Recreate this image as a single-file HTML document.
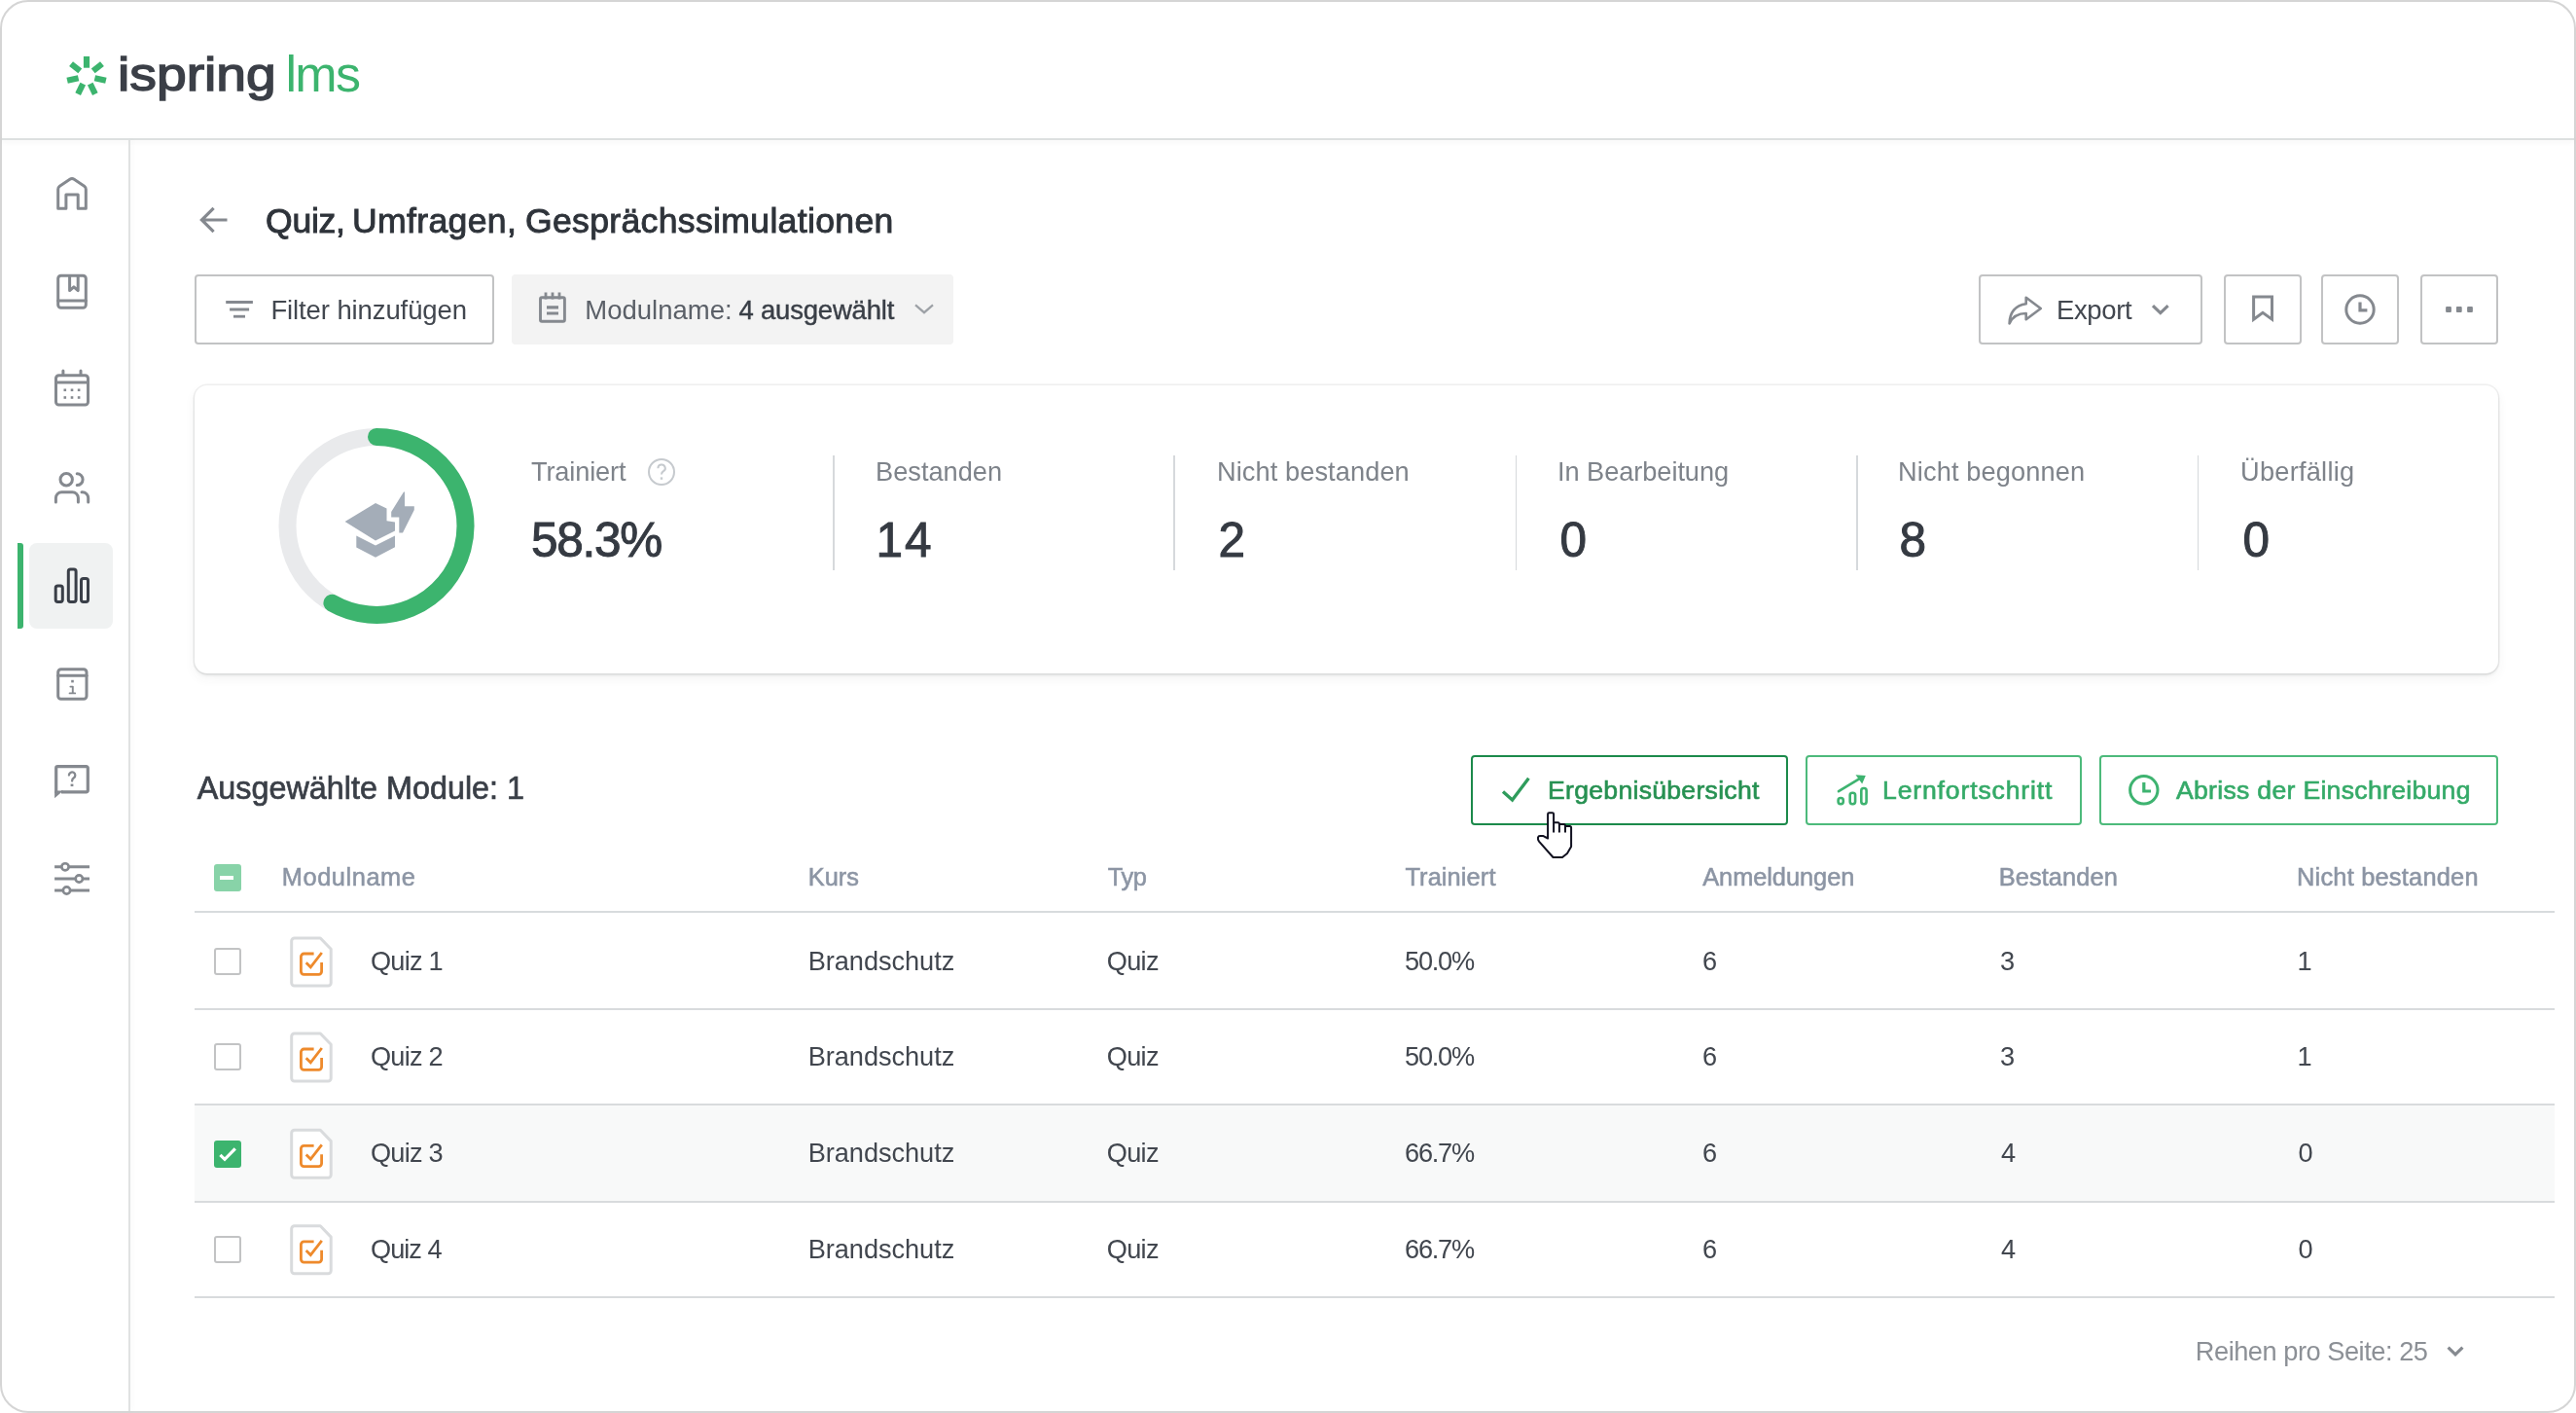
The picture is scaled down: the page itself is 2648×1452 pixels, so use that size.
<!DOCTYPE html>
<html lang="de"><head><meta charset="utf-8"><title>iSpring LMS – Quiz, Umfragen, Gesprächssimulationen</title>
<style>
html,body{margin:0;padding:0;background:#fff;}
body{width:2648px;height:1452px;overflow:hidden;position:relative;font-family:"Liberation Sans",sans-serif;}
#page{position:absolute;left:0;top:0;width:2648px;height:1452px;filter:blur(0.65px);}
.frame{position:absolute;left:0;top:0;width:2644px;height:1448px;border:2px solid #d5d5d5;border-radius:29px;background:#fff;overflow:hidden;}
.abs{position:absolute;}
.t{position:absolute;white-space:nowrap;font-family:"Liberation Sans",sans-serif;}
.hline{position:absolute;left:2px;top:142px;width:2644px;height:2px;background:#dde0e0;box-shadow:0 2px 4px rgba(120,130,130,.10);}
.vline{position:absolute;left:132px;top:144px;width:2px;height:1306px;background:#e0e2e2;box-shadow:2px 0 4px rgba(120,130,130,.06);}
.btn{position:absolute;box-sizing:border-box;border:2px solid #c2c3c4;border-radius:4px;background:#fff;}
.gbtn{position:absolute;box-sizing:border-box;border:2px solid #4dba7b;border-radius:4px;background:#fff;}
.chip{position:absolute;background:#f3f3f3;border-radius:4px;}
.card{position:absolute;left:200px;top:396px;width:2368px;height:296px;border-radius:13px;background:#fff;box-shadow:0 0 0 1.5px rgba(60,70,70,.08),0 2px 3px rgba(60,70,70,.09),0 5px 12px rgba(60,70,70,.06);}
.sep{position:absolute;top:468px;width:1.6px;height:118px;background:#d6d9dc;}
.rl{position:absolute;left:200px;width:2426px;height:2px;background:#d8dbdd;}
.cb{position:absolute;box-sizing:border-box;width:28px;height:28px;border:2px solid #c2c3c4;border-radius:3px;background:#fff;}
svg{position:absolute;overflow:visible;}
h1{margin:0;padding:0;font-size:inherit;font-weight:normal;}
header,section,footer,main{display:block;margin:0;padding:0;}
</style></head>
<body>
<div class="frame"></div>
<div id="page">
<div class="hline"></div><div class="vline"></div>
<div class="abs" style="left:18px;top:558px;width:6px;height:88px;background:#3cb46e;border-radius:0 3px 3px 0;"></div><div class="abs" style="left:30px;top:558px;width:86px;height:88px;background:#f0f2f2;border-radius:8px;"></div>
<div class="btn" style="left:200px;top:282px;width:307.5px;height:71.5px;"></div><div class="chip" style="left:526px;top:282px;width:454px;height:71.5px;"></div><div class="btn" style="left:2034px;top:282px;width:229.5px;height:71.5px;"></div><div class="btn" style="left:2286px;top:282px;width:79.5px;height:71.5px;"></div><div class="btn" style="left:2386px;top:282px;width:79.5px;height:71.5px;"></div><div class="btn" style="left:2488px;top:282px;width:79.5px;height:71.5px;"></div>
<div class="card"></div>
<div class="sep" style="left:856px;"></div><div class="sep" style="left:1206px;"></div><div class="sep" style="left:1557.7px;"></div><div class="sep" style="left:1908px;"></div><div class="sep" style="left:2258.5px;"></div>
<div class="gbtn" style="left:1512px;top:776px;width:326px;height:72px;border-color:#1c8a4b;"></div><div class="gbtn" style="left:1856px;top:776px;width:284px;height:72px;"></div><div class="gbtn" style="left:2158px;top:776px;width:409.5px;height:72px;"></div>
<div class="abs" style="left:200px;top:1136px;width:2426px;height:98.5px;background:#f8f9f9;"></div><div class="rl" style="top:936px;"></div><div class="rl" style="top:1035.8px;"></div><div class="rl" style="top:1134px;"></div><div class="rl" style="top:1233.6px;"></div><div class="rl" style="top:1332px;"></div>
<div class="abs" style="left:220px;top:888px;width:28px;height:28px;border-radius:3px;background:#88d3a8;"></div><div class="abs" style="left:226px;top:900px;width:14px;height:4px;background:#fff;"></div><div class="cb" style="left:220px;top:974px;"></div><div class="cb" style="left:220px;top:1072px;"></div><div class="cb" style="left:220px;top:1269.5px;"></div><div class="abs" style="left:220px;top:1172px;width:28px;height:28px;border-radius:3px;background:#3cb46e;"></div>
<svg width="2648" height="1452" viewBox="0 0 2648 1452" style="left:0;top:0;">
<g transform="translate(89 78.3)" fill="#3cb46e">
<rect x="-3.1" y="-20.4" width="6.2" height="11.8" transform="rotate(0.00)"/>
<rect x="-3.1" y="-20.4" width="6.2" height="11.8" transform="rotate(51.43)"/>
<rect x="-3.1" y="-20.4" width="6.2" height="11.8" transform="rotate(102.86)"/>
<rect x="-3.1" y="-20.4" width="6.2" height="11.8" transform="rotate(154.29)"/>
<rect x="-3.1" y="-20.4" width="6.2" height="11.8" transform="rotate(205.71)"/>
<rect x="-3.1" y="-20.4" width="6.2" height="11.8" transform="rotate(257.14)"/>
<rect x="-3.1" y="-20.4" width="6.2" height="11.8" transform="rotate(308.57)"/>
</g>
<path d="M59.7 214.3V194.4Q59.7 192.4 61.4 191.2L71.8 184.3Q74 182.9 76.2 184.3L86.6 191.2Q88.3 192.4 88.3 194.4V214.3H80.2V200H67.9V214.3Z" fill="none" stroke="#85898f" stroke-width="3" stroke-linecap="round" stroke-linejoin="round" />
<rect x="59.7" y="283.2" width="28.6" height="33" rx="3" fill="none" stroke="#85898f" stroke-width="3" stroke-linecap="round" stroke-linejoin="round" /><path d="M59.7 309H88.3M71.6 283.5V298.6L75.9 294.8 80.2 298.6V283.5" fill="none" stroke="#85898f" stroke-width="3" stroke-linecap="round" stroke-linejoin="round" />
<rect x="57.5" y="385.8" width="33" height="30.2" rx="3" fill="none" stroke="#85898f" stroke-width="3" stroke-linecap="round" stroke-linejoin="round" /><path d="M57.5 393H90.5M64.9 381V385M83 381V385" fill="none" stroke="#85898f" stroke-width="3" stroke-linecap="round" stroke-linejoin="round" />
<rect x="65.5" y="399.5" width="2.6" height="2.6" fill="#85898f"/>
<rect x="72.7" y="399.5" width="2.6" height="2.6" fill="#85898f"/>
<rect x="79.8" y="399.5" width="2.6" height="2.6" fill="#85898f"/>
<rect x="65.5" y="407.2" width="2.6" height="2.6" fill="#85898f"/>
<rect x="72.7" y="407.2" width="2.6" height="2.6" fill="#85898f"/>
<rect x="79.8" y="407.2" width="2.6" height="2.6" fill="#85898f"/>
<circle cx="68.2" cy="492.7" r="6.2" fill="none" stroke="#85898f" stroke-width="3" stroke-linecap="round" stroke-linejoin="round" /><path d="M79.2 486.8a5.9 5.9 0 0 1 0 11.8M57.4 516v-4.2a6 6 0 0 1 6-6h11a6 6 0 0 1 6 6V516M84 505.8h.7a6 6 0 0 1 6 6V516" fill="none" stroke="#85898f" stroke-width="3" stroke-linecap="round" stroke-linejoin="round" />
<rect x="57.2" y="602" width="7.1" height="16.5" rx="2.2" fill="none" stroke="#3a3f48" stroke-width="3" stroke-linecap="round" stroke-linejoin="round" /><rect x="70.3" y="585.1" width="7.8" height="33.4" rx="2.2" fill="none" stroke="#3a3f48" stroke-width="3" stroke-linecap="round" stroke-linejoin="round" /><rect x="83.5" y="594.5" width="7" height="24" rx="2.2" fill="none" stroke="#3a3f48" stroke-width="3" stroke-linecap="round" stroke-linejoin="round" />
<rect x="59.7" y="687.7" width="29.3" height="30.6" rx="3" fill="none" stroke="#85898f" stroke-width="3" stroke-linecap="round" stroke-linejoin="round" /><path d="M59.7 694.3H89" fill="none" stroke="#85898f" stroke-width="3" stroke-linecap="round" stroke-linejoin="round" />
<path d="M72.4 705.6h2.4v6.4M71.6 712.4h5.6" fill="none" stroke="#85898f" stroke-width="1.9" stroke-linecap="round" stroke-linejoin="round" /><rect x="73.2" y="698.8" width="2.6" height="2.6" fill="#85898f"/>
<path d="M57.7 815V789.3a1.6 1.6 0 0 1 1.6-1.6H88.7a1.6 1.6 0 0 1 1.6 1.6V812.2a1.6 1.6 0 0 1-1.6 1.6H63" fill="none" stroke="#85898f" stroke-width="3.2"/><path d="M56.1 812.4H65L56.1 820.2Z" fill="#85898f"/>
<path d="M70.9 796.6a3.2 3.2 0 1 1 5 2.7c-1.3.9-1.8 1.6-1.8 3.2" fill="none" stroke="#85898f" stroke-width="2.3" stroke-linecap="round" stroke-linejoin="round" /><rect x="72.6" y="805.6" width="2.8" height="2.5" fill="#85898f"/>
<path d="M56.1 890.8H92M56.1 903H92M56.1 915H92" fill="none" stroke="#85898f" stroke-width="3"/>
<circle cx="67" cy="890.8" r="3.6" fill="#fff" stroke="#85898f" stroke-width="2.6"/>
<circle cx="81.3" cy="903" r="3.6" fill="#fff" stroke="#85898f" stroke-width="2.6"/>
<circle cx="68.5" cy="915" r="3.6" fill="#fff" stroke="#85898f" stroke-width="2.6"/>
<path d="M233.5 226H208M219.6 213.8L207.4 226 219.6 238.2" fill="none" stroke="#85898f" stroke-width="3.2" stroke-linejoin="miter"/>
<rect x="232.2" y="309" width="27.7" height="3" fill="#85898f"/><rect x="236.1" y="316.5" width="20" height="3" fill="#85898f"/><rect x="240" y="323.8" width="12" height="2.8" fill="#85898f"/>
<rect x="555.5" y="305.7" width="24.9" height="24.5" rx="1.5" fill="none" stroke="#85898f" stroke-width="2.9"/><path d="M561 300.4V307.4M568 300.4V307.4M575 300.4V307.4" fill="none" stroke="#85898f" stroke-width="2.8"/><path d="M562 315.9H574M562 322H574" fill="none" stroke="#85898f" stroke-width="3.2"/>
<path d="M941 313.3L950 321.2 959 313.3" fill="none" stroke="#9da1a6" stroke-width="2.2"/>
<path d="M2082.7 305.8L2097.8 317 2082.7 328.2V322C2073.5 322 2068.5 326 2065.6 332.4 2065.8 321.5 2071.5 313.4 2082.7 312.2Z" fill="none" stroke="#85898f" stroke-width="2.6" stroke-linejoin="round"/>
<path d="M2213 314.2L2220.8 321.6 2228.6 314.2" fill="none" stroke="#85898f" stroke-width="3.2"/>
<path d="M2316.6 328.2V305H2335.5V328.2L2326 321.4Z" fill="none" stroke="#85898f" stroke-width="3" stroke-linejoin="miter"/>
<circle cx="2426" cy="318" r="14.2" fill="none" stroke="#85898f" stroke-width="3" stroke-linecap="round" stroke-linejoin="round" /><path d="M2426 310.4V318.8H2433.4" fill="none" stroke="#85898f" stroke-width="3.2"/>
<rect x="2514.1" y="315" width="5.8" height="6" rx="1" fill="#85898f"/>
<rect x="2524.9" y="315" width="5.8" height="6" rx="1" fill="#85898f"/>
<rect x="2536.1" y="315" width="5.8" height="6" rx="1" fill="#85898f"/>
<circle cx="387" cy="540.4" r="91.5" fill="none" stroke="#e9eaec" stroke-width="18"/>
<path d="M387 448.9A91.5 91.5 0 1 1 341.42 619.74" fill="none" stroke="#3cb46e" stroke-width="18" stroke-linecap="round"/>
<path d="M354.6 536L386 517 397.5 522.6V535.2L406 536.6V545.6L386 555.6Z" fill="#a4adb8"/>
<path d="M366.3 550.4L386 560.4 406 550.4V562.2L386 572.8 366.3 562.4Z" fill="#a4adb8"/>
<path d="M415 505.4L402.2 526V531.4H410.3V547.6H414L425.8 524V520.3H416V505.4Z" fill="#a4adb8"/>
<circle cx="680" cy="485" r="13" fill="none" stroke="#c6cace" stroke-width="2"/>
<path d="M676.4 481.2a3.7 3.6 0 1 1 5.6 3c-1.5 1-2 1.8-2 3.4" fill="none" stroke="#c6cace" stroke-width="2"/><rect x="678.8" y="490.4" width="2.4" height="2.4" fill="#c6cace"/>
<path d="M1545 813.4L1554.6 822 1571.4 799.8" fill="none" stroke="#2f9c5c" stroke-width="3.3"/>
<rect x="1889.6" y="820" width="5.2" height="6.2" rx="2.4" fill="none" stroke="#3eb370" stroke-width="2.6" stroke-linecap="round" stroke-linejoin="round" /><rect x="1901.7" y="814.7" width="5.4" height="11.5" rx="2.4" fill="none" stroke="#3eb370" stroke-width="2.6" stroke-linecap="round" stroke-linejoin="round" /><rect x="1913.3" y="810" width="5.3" height="16.2" rx="2.4" fill="none" stroke="#3eb370" stroke-width="2.6" stroke-linecap="round" stroke-linejoin="round" />
<path d="M1890 813.2L1912 799.8" fill="none" stroke="#3eb370" stroke-width="2.6" stroke-linecap="round" stroke-linejoin="round" /><path d="M1907.5 796.2L1917.8 796.9 1914.2 805.6Z" fill="#3eb370"/>
<circle cx="2203.8" cy="811.8" r="14.2" fill="none" stroke="#3eb370" stroke-width="3" stroke-linecap="round" stroke-linejoin="round" /><path d="M2203.8 804V813H2211" fill="none" stroke="#3eb370" stroke-width="3.2"/>
<path d="M302.7 964.0H329.3L340.2 975.3V1010.0a3 3 0 0 1-3 3H302.7a3 3 0 0 1-3-3V967.0a3 3 0 0 1 3-3Z" fill="#fff" stroke="#d9dbdd" stroke-width="3" stroke-linejoin="round"/>
<path d="M322.6 980.0H312.4a3 3 0 0 0-3 3V998.3a3 3 0 0 0 3 3H327.6a3 3 0 0 0 3-3V989.0" fill="none" stroke="#ee8a2c" stroke-width="2.8" stroke-linecap="butt"/>
<path d="M314.7 989.2L319.3 993.8 330.8 979.0" fill="none" stroke="#ee8a2c" stroke-width="2.8"/>
<path d="M302.7 1062.0H329.3L340.2 1073.3V1108.0a3 3 0 0 1-3 3H302.7a3 3 0 0 1-3-3V1065.0a3 3 0 0 1 3-3Z" fill="#fff" stroke="#d9dbdd" stroke-width="3" stroke-linejoin="round"/>
<path d="M322.6 1078.0H312.4a3 3 0 0 0-3 3V1096.3a3 3 0 0 0 3 3H327.6a3 3 0 0 0 3-3V1087.0" fill="none" stroke="#ee8a2c" stroke-width="2.8" stroke-linecap="butt"/>
<path d="M314.7 1087.2L319.3 1091.8 330.8 1077.0" fill="none" stroke="#ee8a2c" stroke-width="2.8"/>
<path d="M302.7 1161.3000000000002H329.3L340.2 1172.6000000000001V1207.3000000000002a3 3 0 0 1-3 3H302.7a3 3 0 0 1-3-3V1164.3000000000002a3 3 0 0 1 3-3Z" fill="#fff" stroke="#d9dbdd" stroke-width="3" stroke-linejoin="round"/>
<path d="M322.6 1177.3000000000002H312.4a3 3 0 0 0-3 3V1195.6000000000001a3 3 0 0 0 3 3H327.6a3 3 0 0 0 3-3V1186.3000000000002" fill="none" stroke="#ee8a2c" stroke-width="2.8" stroke-linecap="butt"/>
<path d="M314.7 1186.5000000000002L319.3 1191.1000000000001 330.8 1176.3000000000002" fill="none" stroke="#ee8a2c" stroke-width="2.8"/>
<path d="M302.7 1259.8000000000002H329.3L340.2 1271.1000000000001V1305.8000000000002a3 3 0 0 1-3 3H302.7a3 3 0 0 1-3-3V1262.8000000000002a3 3 0 0 1 3-3Z" fill="#fff" stroke="#d9dbdd" stroke-width="3" stroke-linejoin="round"/>
<path d="M322.6 1275.8000000000002H312.4a3 3 0 0 0-3 3V1294.1000000000001a3 3 0 0 0 3 3H327.6a3 3 0 0 0 3-3V1284.8000000000002" fill="none" stroke="#ee8a2c" stroke-width="2.8" stroke-linecap="butt"/>
<path d="M314.7 1285.0000000000002L319.3 1289.6000000000001 330.8 1274.8000000000002" fill="none" stroke="#ee8a2c" stroke-width="2.8"/>
<path d="M226.4 1186.8L231 1191.3 241.8 1180.4" fill="none" stroke="#fff" stroke-width="3.2"/>
<path d="M2516.6 1384.6L2524 1391.8 2531.4 1384.6" fill="none" stroke="#85898f" stroke-width="3.2"/>
<path d="M1591.1 861.5V836.6Q1591.1 835.2 1592.5 835.2H1595.7Q1597.1 835.2 1597.1 836.6V845.2H1601.5Q1602.9 845.2 1602.9 847H1607.5Q1609 847 1609 848.9H1613.6Q1615.1 848.9 1615.1 850.5V870L1611 877 1606 881H1596.5L1582 864.6Q1580.6 862.5 1581 860.5 1581.4 859.1 1583 859.1H1586.5Z" fill="#fff" stroke="#10101f" stroke-width="2" stroke-linejoin="round"/>
<path d="M1597.1 845.2V855.6M1602.9 847V855.6M1609 848.9V855.6" fill="none" stroke="#10101f" stroke-width="2"/>
</svg>
<main>
<header>
<span class="t" style="left:121.10px;top:48.10px;font-size:47.4px;line-height:57px;color:#3b3f47;-webkit-text-stroke:1.42px #3b3f47;transform:scaleX(1.1661);transform-origin:0 0;">ispring</span>
<span class="t" style="left:293.50px;top:44.70px;font-size:52px;line-height:62px;color:#3cb46e;letter-spacing:-1.685px;">lms</span>
</header>
<h1>
<span class="t" style="left:273.00px;top:206.30px;font-size:35.6px;line-height:43px;color:#2e333a;letter-spacing:-0.289px;-webkit-text-stroke:0.93px #2e333a;">Quiz,</span>
<span class="t" style="left:362.00px;top:206.30px;font-size:35.6px;line-height:43px;color:#2e333a;letter-spacing:0.349px;-webkit-text-stroke:0.93px #2e333a;">Umfragen,</span>
<span class="t" style="left:540.00px;top:206.30px;font-size:35.6px;line-height:43px;color:#2e333a;letter-spacing:0.325px;-webkit-text-stroke:0.93px #2e333a;">Gesprächssimulationen</span>
</h1>
<div class="toolbar">
<span class="t" style="left:278.40px;top:301.90px;font-size:27.5px;line-height:33px;color:#42474f;letter-spacing:-0.107px;">Filter hinzufügen</span>
<span class="t" style="left:601.30px;top:301.90px;font-size:27.5px;line-height:33px;color:#5b6068;">Modulname:</span>
<span class="t" style="left:759.40px;top:301.90px;font-size:27.5px;line-height:33px;color:#3a3f47;letter-spacing:-0.193px;-webkit-text-stroke:0.41px #3a3f47;">4 ausgewählt</span>
<span class="t" style="left:2114.00px;top:301.90px;font-size:27.5px;line-height:33px;color:#42474f;letter-spacing:-0.368px;">Export</span>
</div>
<section class="stats">
<span class="t" style="left:546.00px;top:467.90px;font-size:27.2px;line-height:33px;color:#7e838a;letter-spacing:-0.143px;">Trainiert</span>
<span class="t" style="left:546.00px;top:524.50px;font-size:49.5px;line-height:59px;color:#353a42;letter-spacing:-1.260px;-webkit-text-stroke:0.99px #353a42;">58.3%</span>
<span class="t" style="left:900.00px;top:467.90px;font-size:27.2px;line-height:33px;color:#7e838a;letter-spacing:0.015px;">Bestanden</span>
<span class="t" style="left:900.50px;top:524.50px;font-size:49.5px;line-height:59px;color:#353a42;letter-spacing:1.970px;-webkit-text-stroke:0.99px #353a42;">14</span>
<span class="t" style="left:1251.00px;top:467.90px;font-size:27.2px;line-height:33px;color:#7e838a;letter-spacing:0.088px;">Nicht bestanden</span>
<span class="t" style="left:1252.50px;top:524.50px;font-size:49.5px;line-height:59px;color:#353a42;-webkit-text-stroke:0.99px #353a42;">2</span>
<span class="t" style="left:1601.00px;top:467.90px;font-size:27.2px;line-height:33px;color:#7e838a;letter-spacing:-0.056px;">In Bearbeitung</span>
<span class="t" style="left:1603.50px;top:524.50px;font-size:49.5px;line-height:59px;color:#353a42;-webkit-text-stroke:0.99px #353a42;">0</span>
<span class="t" style="left:1951.00px;top:467.90px;font-size:27.2px;line-height:33px;color:#7e838a;letter-spacing:0.128px;">Nicht begonnen</span>
<span class="t" style="left:1952.50px;top:524.50px;font-size:49.5px;line-height:59px;color:#353a42;-webkit-text-stroke:0.99px #353a42;">8</span>
<span class="t" style="left:2303.00px;top:467.90px;font-size:27.2px;line-height:33px;color:#7e838a;letter-spacing:0.253px;">Überfällig</span>
<span class="t" style="left:2305.50px;top:524.50px;font-size:49.5px;line-height:59px;color:#353a42;-webkit-text-stroke:0.99px #353a42;">0</span>
</section>
<div class="actions">
<span class="t" style="left:202.70px;top:790.60px;font-size:32.3px;line-height:39px;color:#3a3f47;letter-spacing:0.031px;-webkit-text-stroke:0.71px #3a3f47;">Ausgewählte Module: 1</span>
<span class="t" style="left:1591.00px;top:796.40px;font-size:26.6px;line-height:32px;color:#279152;letter-spacing:0.283px;-webkit-text-stroke:0.64px #279152;">Ergebnisübersicht</span>
<span class="t" style="left:1935.00px;top:796.40px;font-size:26.6px;line-height:32px;color:#35aa68;letter-spacing:0.844px;-webkit-text-stroke:0.64px #35aa68;">Lernfortschritt</span>
<span class="t" style="left:2237.00px;top:796.40px;font-size:26.6px;line-height:32px;color:#35aa68;letter-spacing:0.298px;-webkit-text-stroke:0.64px #35aa68;">Abriss der Einschreibung</span>
</div>
<div class="thead">
<span class="t" style="left:289.80px;top:886.00px;font-size:25.4px;line-height:30px;color:#8c95a4;letter-spacing:0.557px;-webkit-text-stroke:0.56px #8c95a4;">Modulname</span>
<span class="t" style="left:830.70px;top:886.00px;font-size:25.4px;line-height:30px;color:#8c95a4;letter-spacing:0.029px;-webkit-text-stroke:0.56px #8c95a4;">Kurs</span>
<span class="t" style="left:1138.70px;top:886.00px;font-size:25.4px;line-height:30px;color:#8c95a4;letter-spacing:-0.402px;-webkit-text-stroke:0.56px #8c95a4;">Typ</span>
<span class="t" style="left:1444.40px;top:886.00px;font-size:25.4px;line-height:30px;color:#8c95a4;letter-spacing:0.110px;-webkit-text-stroke:0.56px #8c95a4;">Trainiert</span>
<span class="t" style="left:1750.20px;top:886.00px;font-size:25.4px;line-height:30px;color:#8c95a4;letter-spacing:-0.057px;-webkit-text-stroke:0.56px #8c95a4;">Anmeldungen</span>
<span class="t" style="left:2054.70px;top:886.00px;font-size:25.4px;line-height:30px;color:#8c95a4;letter-spacing:0.089px;-webkit-text-stroke:0.56px #8c95a4;">Bestanden</span>
<span class="t" style="left:2361.00px;top:886.00px;font-size:25.4px;line-height:30px;color:#8c95a4;letter-spacing:0.216px;-webkit-text-stroke:0.56px #8c95a4;">Nicht bestanden</span>
</div>
<div class="row">
<span class="t" style="left:381.00px;top:971.00px;font-size:27.2px;line-height:33px;color:#42474f;letter-spacing:-0.791px;">Quiz 1</span>
<span class="t" style="left:830.70px;top:971.00px;font-size:27.2px;line-height:33px;color:#42474f;letter-spacing:-0.053px;">Brandschutz</span>
<span class="t" style="left:1137.70px;top:971.00px;font-size:27.2px;line-height:33px;color:#42474f;letter-spacing:-0.669px;">Quiz</span>
<span class="t" style="left:1444.00px;top:971.00px;font-size:27.2px;line-height:33px;color:#42474f;letter-spacing:-1.229px;">50.0%</span>
<span class="t" style="left:1750.00px;top:971.00px;font-size:27.2px;line-height:33px;color:#42474f;">6</span>
<span class="t" style="left:2056.00px;top:971.00px;font-size:27.2px;line-height:33px;color:#42474f;">3</span>
<span class="t" style="left:2361.50px;top:971.00px;font-size:27.2px;line-height:33px;color:#42474f;">1</span>
</div>
<div class="row">
<span class="t" style="left:381.00px;top:1069.00px;font-size:27.2px;line-height:33px;color:#42474f;letter-spacing:-0.791px;">Quiz 2</span>
<span class="t" style="left:830.70px;top:1069.00px;font-size:27.2px;line-height:33px;color:#42474f;letter-spacing:-0.053px;">Brandschutz</span>
<span class="t" style="left:1137.70px;top:1069.00px;font-size:27.2px;line-height:33px;color:#42474f;letter-spacing:-0.669px;">Quiz</span>
<span class="t" style="left:1444.00px;top:1069.00px;font-size:27.2px;line-height:33px;color:#42474f;letter-spacing:-1.229px;">50.0%</span>
<span class="t" style="left:1750.00px;top:1069.00px;font-size:27.2px;line-height:33px;color:#42474f;">6</span>
<span class="t" style="left:2056.00px;top:1069.00px;font-size:27.2px;line-height:33px;color:#42474f;">3</span>
<span class="t" style="left:2361.50px;top:1069.00px;font-size:27.2px;line-height:33px;color:#42474f;">1</span>
</div>
<div class="row sel">
<span class="t" style="left:381.00px;top:1168.30px;font-size:27.2px;line-height:33px;color:#42474f;letter-spacing:-0.791px;">Quiz 3</span>
<span class="t" style="left:830.70px;top:1168.30px;font-size:27.2px;line-height:33px;color:#42474f;letter-spacing:-0.053px;">Brandschutz</span>
<span class="t" style="left:1137.70px;top:1168.30px;font-size:27.2px;line-height:33px;color:#42474f;letter-spacing:-0.669px;">Quiz</span>
<span class="t" style="left:1444.00px;top:1168.30px;font-size:27.2px;line-height:33px;color:#42474f;letter-spacing:-1.229px;">66.7%</span>
<span class="t" style="left:1750.00px;top:1168.30px;font-size:27.2px;line-height:33px;color:#42474f;">6</span>
<span class="t" style="left:2057.00px;top:1168.30px;font-size:27.2px;line-height:33px;color:#42474f;">4</span>
<span class="t" style="left:2362.50px;top:1168.30px;font-size:27.2px;line-height:33px;color:#42474f;">0</span>
</div>
<div class="row">
<span class="t" style="left:381.00px;top:1266.80px;font-size:27.2px;line-height:33px;color:#42474f;letter-spacing:-0.991px;">Quiz 4</span>
<span class="t" style="left:830.70px;top:1266.80px;font-size:27.2px;line-height:33px;color:#42474f;letter-spacing:-0.053px;">Brandschutz</span>
<span class="t" style="left:1137.70px;top:1266.80px;font-size:27.2px;line-height:33px;color:#42474f;letter-spacing:-0.669px;">Quiz</span>
<span class="t" style="left:1444.00px;top:1266.80px;font-size:27.2px;line-height:33px;color:#42474f;letter-spacing:-1.229px;">66.7%</span>
<span class="t" style="left:1750.00px;top:1266.80px;font-size:27.2px;line-height:33px;color:#42474f;">6</span>
<span class="t" style="left:2057.00px;top:1266.80px;font-size:27.2px;line-height:33px;color:#42474f;">4</span>
<span class="t" style="left:2362.50px;top:1266.80px;font-size:27.2px;line-height:33px;color:#42474f;">0</span>
</div>
<footer>
<span class="t" style="left:2256.80px;top:1371.80px;font-size:27.2px;line-height:33px;color:#8c9096;letter-spacing:-0.461px;">Reihen pro Seite: 25</span>
</footer>
</main>
</div>
</body></html>
